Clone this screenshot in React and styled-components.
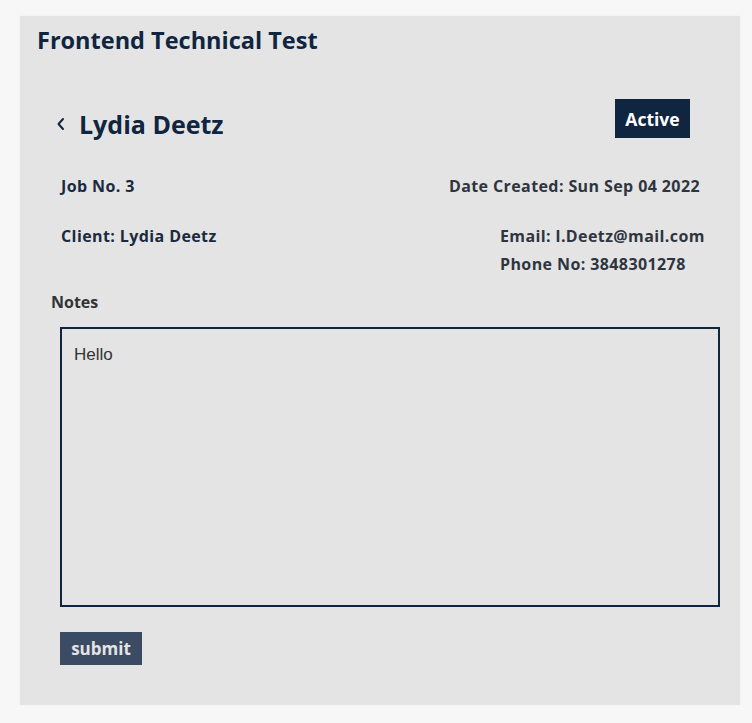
import React from "react";
import styled, { createGlobalStyle } from "styled-components";

const Global = createGlobalStyle`
  html, body { margin: 0; padding: 0; background: #f7f7f7; }
  body { font-family: "Open Sans", "Noto Sans", sans-serif; }
  * { box-sizing: border-box; }
`;

const Page = styled.div`
  padding: 16px 12px 18px 20px;
`;

const Panel = styled.main`
  background: #e4e4e4;
  width: 720px;
  min-height: 689px;
  padding: 9px 20px 40px 17px;
  box-shadow: 0 0 3px rgba(0,0,0,0.04);
`;

const Title = styled.h1`
  margin: 0;
  font-size: 23.5px;
  font-weight: 700;
  color: #0f2540;
  line-height: 30px;
`;

const HeaderRow = styled.div`
  display: flex;
  align-items: flex-start;
  justify-content: space-between;
  margin-top: 44px;
  padding-left: 19px;
  padding-right: 30px;
`;

const NameGroup = styled.div`
  display: flex;
  align-items: center;
  gap: 13px;
  margin-top: 10px;
`;

const Name = styled.h2`
  margin: 0;
  font-size: 25px;
  font-weight: 700;
  color: #0f2540;
  line-height: 30px;
`;

const Badge = styled.span`
  background: #0f2540;
  color: #ffffff;
  font-size: 17.5px;
  font-weight: 700;
  height: 39px;
  width: 75px;
  display: flex;
  align-items: center;
  justify-content: center;
`;

const InfoRow = styled.div`
  display: flex;
  justify-content: space-between;
  align-items: flex-start;
  padding-left: 24px;
  padding-right: 20px;
  margin-top: ${p => p.$mt}px;
`;

const Info = styled.div`
  font-size: 16px;
  font-weight: 700;
  letter-spacing: 0.4px;
  color: ${p => (p.$muted ? "#2f3540" : "#1a2a40")};
  line-height: 20px;
  white-space: nowrap;
`;

const Stack = styled.div`
  display: flex;
  flex-direction: column;
  gap: 8px;
  width: 200px;
`;

const Label = styled.div`
  font-size: 16px;
  font-weight: 700;
  color: #333;
  margin-top: 18px;
  padding-left: 14px;
  line-height: 20px;
`;

const Notes = styled.textarea`
  display: block;
  margin: 15px 0 0 23px;
  width: 660px;
  height: 280px;
  border: 2px solid #0f2540;
  background: #e4e4e4;
  padding: 16px 12px;
  font-family: "Liberation Sans", Arial, sans-serif;
  font-size: 17px;
  color: #333;
  resize: none;
  outline: none;
`;

const Submit = styled.button`
  margin: 25px 0 0 23px;
  background: #3a4b63;
  color: #e4e4e4;
  border: none;
  height: 33px;
  width: 82px;
  font-family: "Open Sans", sans-serif;
  font-size: 17px;
  font-weight: 700;
  padding: 0;
`;

const Chevron = () => (
  <svg width="10" height="14" viewBox="0 0 10 14" fill="none">
    <path d="M7 2 L2.5 7 L7 12" stroke="#0f2540" strokeWidth="2" strokeLinecap="round" strokeLinejoin="round" />
  </svg>
);

export default function App() {
  return (
    <Page>
      <Global />
      <Panel>
        <Title>Frontend Technical Test</Title>
        <HeaderRow>
          <NameGroup>
            <Chevron />
            <Name>Lydia Deetz</Name>
          </NameGroup>
          <Badge>Active</Badge>
        </HeaderRow>
        <InfoRow $mt={37}>
          <Info>Job No. 3</Info>
          <Info $muted>Date Created: Sun Sep 04 2022</Info>
        </InfoRow>
        <InfoRow $mt={30}>
          <Info>Client: Lydia Deetz</Info>
          <Stack>
            <Info $muted>Email: l.Deetz@mail.com</Info>
            <Info $muted>Phone No: 3848301278</Info>
          </Stack>
        </InfoRow>
        <Label>Notes</Label>
        <Notes defaultValue="Hello" />
        <Submit>submit</Submit>
      </Panel>
    </Page>
  );
}
